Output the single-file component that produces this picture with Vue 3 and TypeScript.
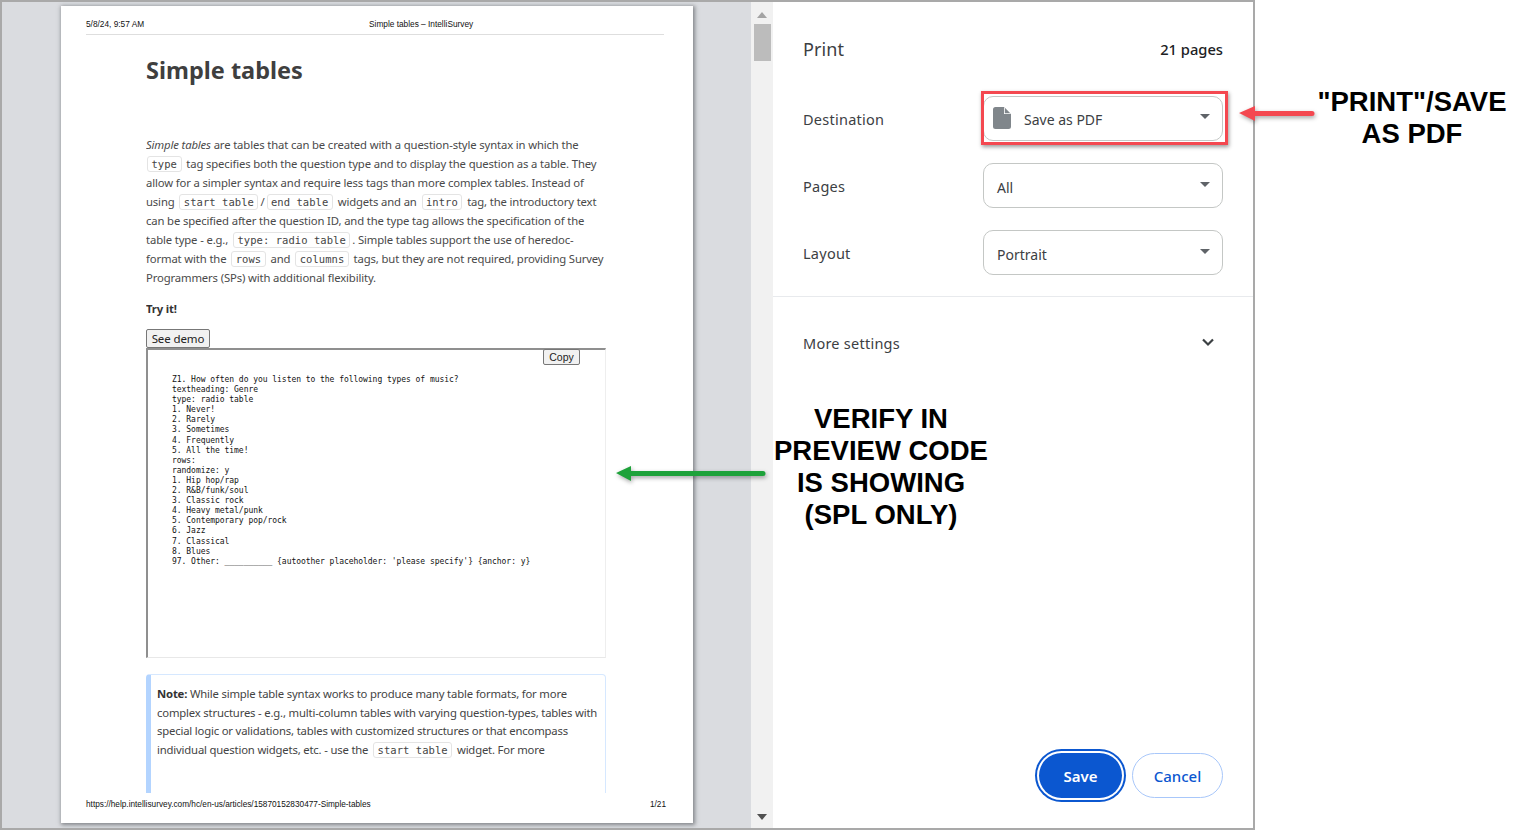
<script setup lang="ts">
const codeLines: string[] = [
  'Z1. How often do you listen to the following types of music?',
  'textheading: Genre',
  'type: radio table',
  '1. Never!',
  '2. Rarely',
  '3. Sometimes',
  '4. Frequently',
  '5. All the time!',
  'rows:',
  'randomize: y',
  '1. Hip hop/rap',
  '2. R&B/funk/soul',
  '3. Classic rock',
  '4. Heavy metal/punk',
  '5. Contemporary pop/rock',
  '6. Jazz',
  '7. Classical',
  '8. Blues',
  "97. Other: __________ {autoother placeholder: 'please specify'} {anchor: y}",
]
const selects = [
  { label: 'Pages', value: 'All' },
  { label: 'Layout', value: 'Portrait' },
]
</script>

<template>
  <div class="screen">
    <div class="frame">
      <main class="preview">
        <section class="page">
          <header class="page-head">
            <span class="head-side">5/8/24, 9:57 AM</span>
            <span class="page-title">Simple tables – IntelliSurvey</span>
          </header>
          <article class="article">
            <h1>Simple tables</h1>
            <p class="body">
              <em>Simple tables</em> are tables that can be created with a question-style syntax in which the<br />
              <code class="first">type</code> tag specifies both the question type and to display the question as a table. They<br />
              allow for a simpler syntax and require less tags than more complex tables. Instead of<br />
              using <code>start table</code>/<code>end table</code> widgets and an <code>intro</code> tag, the introductory text<br />
              can be specified after the question ID, and the type tag allows the specification of the<br />
              table type - e.g., <code>type: radio table</code>. Simple tables support the use of heredoc-<br />
              format with the <code>rows</code> and <code>columns</code> tags, but they are not required, providing Survey<br />
              Programmers (SPs) with additional flexibility.
            </p>
            <p class="try"><strong>Try it!</strong></p>
            <button class="demo-btn" type="button">See demo</button>
            <div class="code-box">
              <button class="copy-btn" type="button">Copy</button>
              <div v-for="line in codeLines" :key="line" class="code-line">{{ line }}</div>
            </div>
            <aside class="note">
              <strong>Note:</strong> While simple table syntax works to produce many table formats, for more<br />
              complex structures - e.g., multi-column tables with varying question-types, tables with<br />
              special logic or validations, tables with customized structures or that encompass<br />
              individual question widgets, etc. - use the <code>start table</code> widget. For more
            </aside>
          </article>
          <footer class="page-foot">
            <span>https://help.intellisurvey.com/hc/en-us/articles/15870152830477-Simple-tables</span>
            <span>1/21</span>
          </footer>
        </section>
      </main>

      <div class="scrollbar">
        <span class="tri up"></span>
        <span class="thumb"></span>
        <span class="tri down"></span>
      </div>

      <aside class="panel">
        <div class="panel-head">
          <span class="print">Print</span>
          <span class="count">21 pages</span>
        </div>
        <div class="rows">
          <div class="row">
            <span class="label">Destination</span>
            <div class="select dest">
              <svg class="doc" width="18" height="22" viewBox="0 0 18 22">
                <path d="M2.5 0H11l7 7v12.5a2.5 2.5 0 0 1-2.5 2.5h-13A2.5 2.5 0 0 1 0 19.500v-17A2.500 2.500 0 0 1 2.500 0z" fill="#80868b" />
                <path d="M11 0v7h7z" fill="#fff" />
                <path d="M11.800 0.800v5.400h5.400z" fill="#80868b" />
              </svg>
              <span class="dest-text">Save as PDF</span>
              <span class="caret"></span>
            </div>
          </div>
          <div v-for="s in selects" :key="s.label" class="row">
            <span class="label">{{ s.label }}</span>
            <div class="select">
              <span>{{ s.value }}</span>
              <span class="caret"></span>
            </div>
          </div>
        </div>
        <div class="more">
          <span class="label">More settings</span>
          <svg class="chev" width="14" height="10" viewBox="0 0 14 10"><path d="M2 2.500l5 5 5-5" fill="none" stroke="#3c4043" stroke-width="2.200" /></svg>
        </div>
        <div class="actions">
          <button class="save" type="button">Save</button>
          <button class="cancel" type="button">Cancel</button>
        </div>
      </aside>
    </div>

    <div class="red-box"></div>
    <svg class="arrow arrow-red" width="90" height="24" viewBox="0 0 90 24">
      <path d="M4 10l16-7v5h57a2.500 2.500 0 0 1 0 5H20v5z" fill="#f44850" />
    </svg>
    <svg class="arrow arrow-green" width="165" height="24" viewBox="0 0 165 24">
      <path d="M4 10l15-7v5h132a2.500 2.500 0 0 1 0 5H19v5z" fill="#1ea23a" />
    </svg>
    <div class="callout callout-print">"PRINT"/SAVE<br />AS PDF</div>
    <div class="callout callout-verify">VERIFY IN<br />PREVIEW CODE<br />IS SHOWING<br />(SPL ONLY)</div>
  </div>
</template>

<style>
html, body { margin: 0; background: #fff; }
</style>

<style scoped>
.screen {
  position: relative;
  width: 1533px;
  height: 830px;
  overflow: hidden;
  background: #fff;
}
.frame {
  display: flex;
  box-sizing: border-box;
  width: 1255px;
  height: 830px;
  border: 2px solid #a9a9a9;
}
.preview {
  flex: 0 0 749px;
  box-sizing: border-box;
  padding: 4px 0 0 59px;
  background: #dadce0;
  overflow: hidden;
}
.page {
  display: flex;
  flex-direction: column;
  box-sizing: border-box;
  width: 632px;
  height: 817px;
  background: #fff;
  box-shadow: 1px 1px 4px 1px rgba(60, 64, 67, 0.55);
}
.page-head {
  display: flex;
  align-items: center;
  flex: 0 0 auto;
  height: 29px;
  padding: 8px 0 0;
  margin: 0 29px 0 25px;
  box-sizing: border-box;
  border-bottom: 1px solid #dedede;
  font: 8.300px/10px "Liberation Sans", sans-serif;
  color: #111;
}
.head-side { flex: 0 0 283px; white-space: nowrap; }
.page-title { white-space: nowrap; }
.article {
  flex: 1 1 auto;
  min-height: 0;
  overflow: hidden;
  margin-left: 85px;
  width: 460px;
  font: 11.300px/19px "Noto Sans", sans-serif;
  color: #4a4a4a;
  letter-spacing: -0.14px;
}
h1 {
  margin: 17px 0 0;
  font: 700 23.500px/36px "Noto Sans", sans-serif;
  letter-spacing: 0;
  color: #3f3f3f;
}
.body {
  margin: 47px 0 0;
  white-space: nowrap;
}
code {
  font: 10.500px/13px "DejaVu Sans Mono", monospace;
  letter-spacing: 0.05px;
  padding: 1px 3.500px;
  margin: 0 2px;
  border: 1px solid #e4e4e4;
  border-radius: 3px;
  color: #444;
  background: #fff;
}
.first { margin-left: 1px; }
.try {
  margin: 12px 0 0;
  color: #333;
}
.try strong { font-weight: 700; }
.demo-btn {
  display: block;
  box-sizing: border-box;
  width: 64px;
  height: 19px;
  margin: 11px 0 0;
  padding: 0;
  font: 11.500px/16px "Noto Sans", sans-serif;
  letter-spacing: -0.1px;
  color: #222;
  background: #f1f1f1;
  border: 1px solid #777;
  border-radius: 2px;
}
.code-box {
  position: relative;
  box-sizing: border-box;
  height: 310px;
  padding: 25px 0 0 24px;
  border-top: 2px solid #8f8f8f;
  border-left: 2px solid #8f8f8f;
  border-right: 1px solid #eee;
  border-bottom: 1px solid #e8e8e8;
}
.copy-btn {
  position: absolute;
  top: -1px;
  left: 395px;
  box-sizing: border-box;
  width: 37px;
  height: 16px;
  padding: 0;
  font: 10.500px/14px "Liberation Sans", sans-serif;
  letter-spacing: 0;
  color: #222;
  background: #f1f1f1;
  border: 1px solid #777;
  border-radius: 2px;
}
.code-line {
  font: 8px/10.100px "DejaVu Sans Mono", monospace;
  letter-spacing: -0.04px;
  white-space: pre;
  color: #111;
}
.note {
  position: relative;
  box-sizing: border-box;
  height: 140px;
  margin-top: 16px;
  padding: 10px 0 0 6px;
  border: 1px solid #d6e8ff;
  border-left: 5px solid #b3d4ff;
  border-radius: 4px;
  font: 11.300px/18.700px "Noto Sans", sans-serif;
  letter-spacing: -0.18px;
  color: #444;
  white-space: nowrap;
}
.note strong { color: #333; }
.page-foot {
  display: flex;
  justify-content: space-between;
  align-items: center;
  flex: 0 0 30px;
  padding: 0 27px 7px 25px;
  box-sizing: border-box;
  font: 8.260px/10px "Liberation Sans", sans-serif;
  color: #111;
}
.scrollbar {
  display: flex;
  flex-direction: column;
  align-items: center;
  flex: 0 0 22px;
  padding-top: 10px;
  box-sizing: border-box;
  background: #f1f1f1;
}
.tri { width: 0; height: 0; border-left: 5px solid transparent; border-right: 5px solid transparent; }
.tri.up { border-bottom: 6px solid #a3a3a3; }
.tri.down { margin-top: auto; margin-bottom: 8px; border-top: 6px solid #505050; }
.thumb { width: 17px; height: 37px; margin-top: 6px; background: #bcbcbc; }
.panel {
  display: flex;
  flex-direction: column;
  flex: 0 0 480px;
  box-sizing: border-box;
  background: #fff;
  font-family: "Noto Sans", sans-serif;
  color: #3c4043;
}
.panel-head {
  display: flex;
  justify-content: space-between;
  align-items: center;
  height: 94px;
  box-sizing: border-box;
  padding: 0 30px 0 30px;
}
.print { font-size: 18px; letter-spacing: 0.1px; color: #3c4043; }
.count { font-size: 14.700px; font-weight: 500; color: #202124; }
.rows {
  display: flex;
  flex-direction: column;
  gap: 22px;
  padding: 0 30px 21px;
  border-bottom: 1px solid #e8eaed;
}
.row {
  display: flex;
  align-items: center;
  justify-content: space-between;
  height: 45px;
}
.label { font-size: 14.500px; letter-spacing: 0.25px; color: #3c4043; }
.select {
  display: flex;
  align-items: center;
  box-sizing: border-box;
  width: 240px;
  height: 45px;
  padding: 3px 12px 0 13px;
  border: 1px solid #c4c7c5;
  border-radius: 10px;
  font-size: 14px;
  color: #3c4043;
}
.dest { padding-top: 2px; padding-left: 9px; }
.doc { flex: none; margin-right: 13px; margin-top: -4px; }
.caret {
  margin-left: auto;
  margin-top: -6px;
  width: 0;
  height: 0;
  border-left: 5px solid transparent;
  border-right: 5px solid transparent;
  border-top: 5px solid #5f6368;
}
.more {
  display: flex;
  align-items: center;
  justify-content: space-between;
  height: 94px;
  padding: 0 38px 0 30px;
}
.more .label { margin-top: -2px; }
.chev { margin-top: -5px; }
.actions {
  display: flex;
  justify-content: flex-end;
  gap: 10px;
  margin-top: auto;
  padding: 0 30px 30px 0;
}
.save, .cancel {
  box-sizing: border-box;
  height: 45px;
  padding: 0;
  border-radius: 23px;
  font: 600 15px/20px "Noto Sans", sans-serif;
}
.save {
  width: 83px;
  color: #fff;
  background: #0b57d0;
  border: none;
  box-shadow: 0 0 0 2px #fff, 0 0 0 4px #0b57d0;
}
.cancel {
  width: 91px;
  font-weight: 500;
  color: #0b57d0;
  background: #fff;
  border: 1px solid #a8c7fa;
}
.red-box {
  position: absolute;
  left: 981px;
  top: 91px;
  width: 247px;
  height: 54px;
  box-sizing: border-box;
  border: 3px solid #f44850;
  box-shadow: 1px 2px 4px rgba(0, 0, 0, 0.4);
}
.arrow { position: absolute; filter: drop-shadow(1px 2px 2px rgba(0, 0, 0, 0.35)); }
.arrow-red { left: 1235px; top: 103px; }
.arrow-green { left: 612px; top: 463px; }
.callout {
  position: absolute;
  font: 700 27.500px/32px "Liberation Sans", sans-serif;
  color: #000;
  text-align: center;
  white-space: nowrap;
}
.callout-print { left: 1312px; top: 85px; width: 200px; padding-top: 1px; }
.callout-verify { left: 771px; top: 403px; width: 220px; }
</style>
